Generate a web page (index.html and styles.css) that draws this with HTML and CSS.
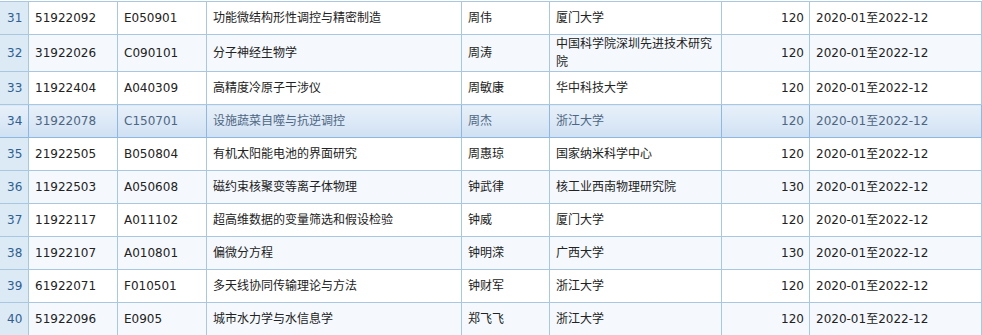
FILE: index.html
```html
<!DOCTYPE html>
<html lang="zh-CN">
<head>
<meta charset="utf-8">
<title>项目列表</title>
<link rel="stylesheet" href="styles.css">
</head>
<body>
<table class="grid">
  <colgroup>
    <col class="c-idx"><col class="c-no"><col class="c-code"><col class="c-title"><col class="c-name"><col class="c-org"><col class="c-amt"><col class="c-date">
  </colgroup>
  <tbody>
    <tr><td class="idx">31</td><td>51922092</td><td>E050901</td><td>功能微结构形性调控与精密制造</td><td>周伟</td><td>厦门大学</td><td class="amt">120</td><td>2020-01至2022-12</td></tr>
    <tr class="alt"><td class="idx">32</td><td>31922026</td><td>C090101</td><td>分子神经生物学</td><td>周涛</td><td>中国科学院深圳先进技术研究院</td><td class="amt">120</td><td>2020-01至2022-12</td></tr>
    <tr><td class="idx">33</td><td>11922404</td><td>A040309</td><td>高精度冷原子干涉仪</td><td>周敏康</td><td>华中科技大学</td><td class="amt">120</td><td>2020-01至2022-12</td></tr>
    <tr class="hover"><td class="idx">34</td><td>31922078</td><td>C150701</td><td>设施蔬菜自噬与抗逆调控</td><td>周杰</td><td>浙江大学</td><td class="amt">120</td><td>2020-01至2022-12</td></tr>
    <tr><td class="idx">35</td><td>21922505</td><td>B050804</td><td>有机太阳能电池的界面研究</td><td>周惠琼</td><td>国家纳米科学中心</td><td class="amt">120</td><td>2020-01至2022-12</td></tr>
    <tr class="alt"><td class="idx">36</td><td>11922503</td><td>A050608</td><td>磁约束核聚变等离子体物理</td><td>钟武律</td><td>核工业西南物理研究院</td><td class="amt">130</td><td>2020-01至2022-12</td></tr>
    <tr><td class="idx">37</td><td>11922117</td><td>A011102</td><td>超高维数据的变量筛选和假设检验</td><td>钟威</td><td>厦门大学</td><td class="amt">120</td><td>2020-01至2022-12</td></tr>
    <tr class="alt"><td class="idx">38</td><td>11922107</td><td>A010801</td><td>偏微分方程</td><td>钟明溁</td><td>广西大学</td><td class="amt">130</td><td>2020-01至2022-12</td></tr>
    <tr><td class="idx">39</td><td>61922071</td><td>F010501</td><td>多天线协同传输理论与方法</td><td>钟财军</td><td>浙江大学</td><td class="amt">120</td><td>2020-01至2022-12</td></tr>
    <tr class="alt"><td class="idx">40</td><td>51922096</td><td>E0905</td><td>城市水力学与水信息学</td><td>郑飞飞</td><td>浙江大学</td><td class="amt">120</td><td>2020-01至2022-12</td></tr>
  </tbody>
</table>
</body>
</html>
```

FILE: styles.css
```css
html, body {
  margin: 0;
  padding: 0;
  background: #ffffff;
  overflow: hidden;
}

body {
  padding-top: 1px;
}

.grid {
  border-collapse: collapse;
  table-layout: fixed;
  width: 982px;
  margin-left: -1px;
  font-family: "DejaVu Sans", "Noto Sans CJK SC", sans-serif;
  font-size: 12px;
  color: #222222;
}

.c-idx { width: 29px; }
.c-no { width: 89px; }
.c-code { width: 89px; }
.c-title { width: 255px; }
.c-name { width: 88px; }
.c-org { width: 172px; }
.c-amt { width: 88px; }
.c-date { width: 172px; }

.grid td {
  border: 1px solid #a9c7e1;
  height: 32px;
  padding: 0 5px 0 6px;
  line-height: 18px;
  vertical-align: middle;
  white-space: normal;
  overflow: hidden;
}

.grid td.idx {
  background: #dceaf5;
  color: #2f5f92;
  padding-left: 7px;
  padding-right: 0;
}

.grid tr.alt td {
  background: #f5f9fe;
}

.grid tr.alt td.idx {
  background: #dceaf5;
}

.grid td.amt {
  text-align: right;
  padding-right: 5px;
}

.grid tr.hover td {
  background: linear-gradient(to bottom, #e7f0fa 0%, #dbe8f6 55%, #cfe1f3 100%);
  color: #4e6682;
  border-color: #8fb7df;
}

.grid tr.hover td.idx {
  color: #2f5f92;
}
```
